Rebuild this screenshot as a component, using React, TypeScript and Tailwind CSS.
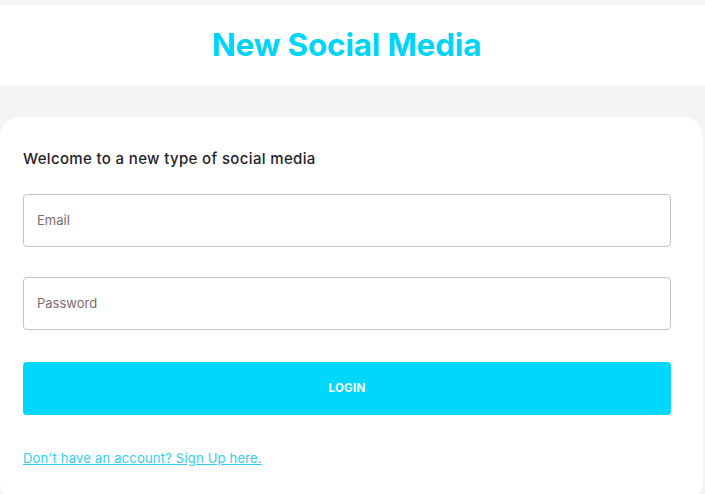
export default function App() {
    return (
        <div className="min-h-screen bg-[#f4f4f4] pt-[5px]" style={{ fontFamily: 'Inter, "Noto Sans", sans-serif' }}>
            <header className="bg-white h-[80px] flex items-center justify-center pr-[12px]">
                <h1 className="text-[31.5px] font-bold text-[#00d4f8] tracking-[-0.2px]">New Social Media</h1>
            </header>
            <main className="pt-[32px]">
                <div className="w-[703px] min-h-[385px] bg-white rounded-[20px] pl-[23px] pr-[32px] pt-[31px] pb-[30px]">
                    <p className="text-[15px] leading-[22px] font-medium text-[#1f2329] tracking-[0.35px]">Welcome to a new type of social media</p>
                    <input
                        type="email"
                        placeholder="Email"
                        className="mt-[24px] block w-full h-[53px] border border-[#c4c4c4] rounded-[4px] px-[13px] pb-[2px] text-[13px] placeholder:text-[#7a6b6b] outline-none"
                    />
                    <input
                        type="password"
                        placeholder="Password"
                        className="mt-[30px] block w-full h-[53px] border border-[#c4c4c4] rounded-[4px] px-[13px] pb-[2px] text-[13px] placeholder:text-[#7a6b6b] outline-none"
                    />
                    <button className="mt-[32px] w-full h-[53px] bg-[#00d7fc] rounded-[4px] text-white text-[11.5px] font-bold tracking-[0.3px]">
                        LOGIN
                    </button>
                    <a href="#" className="mt-[34px] inline-block text-[13px] leading-[18px] text-[#33cdee] underline tracking-[0.2px]">
                        Don't have an account? Sign Up here.
                    </a>
                </div>
            </main>
        </div>
    )
}
